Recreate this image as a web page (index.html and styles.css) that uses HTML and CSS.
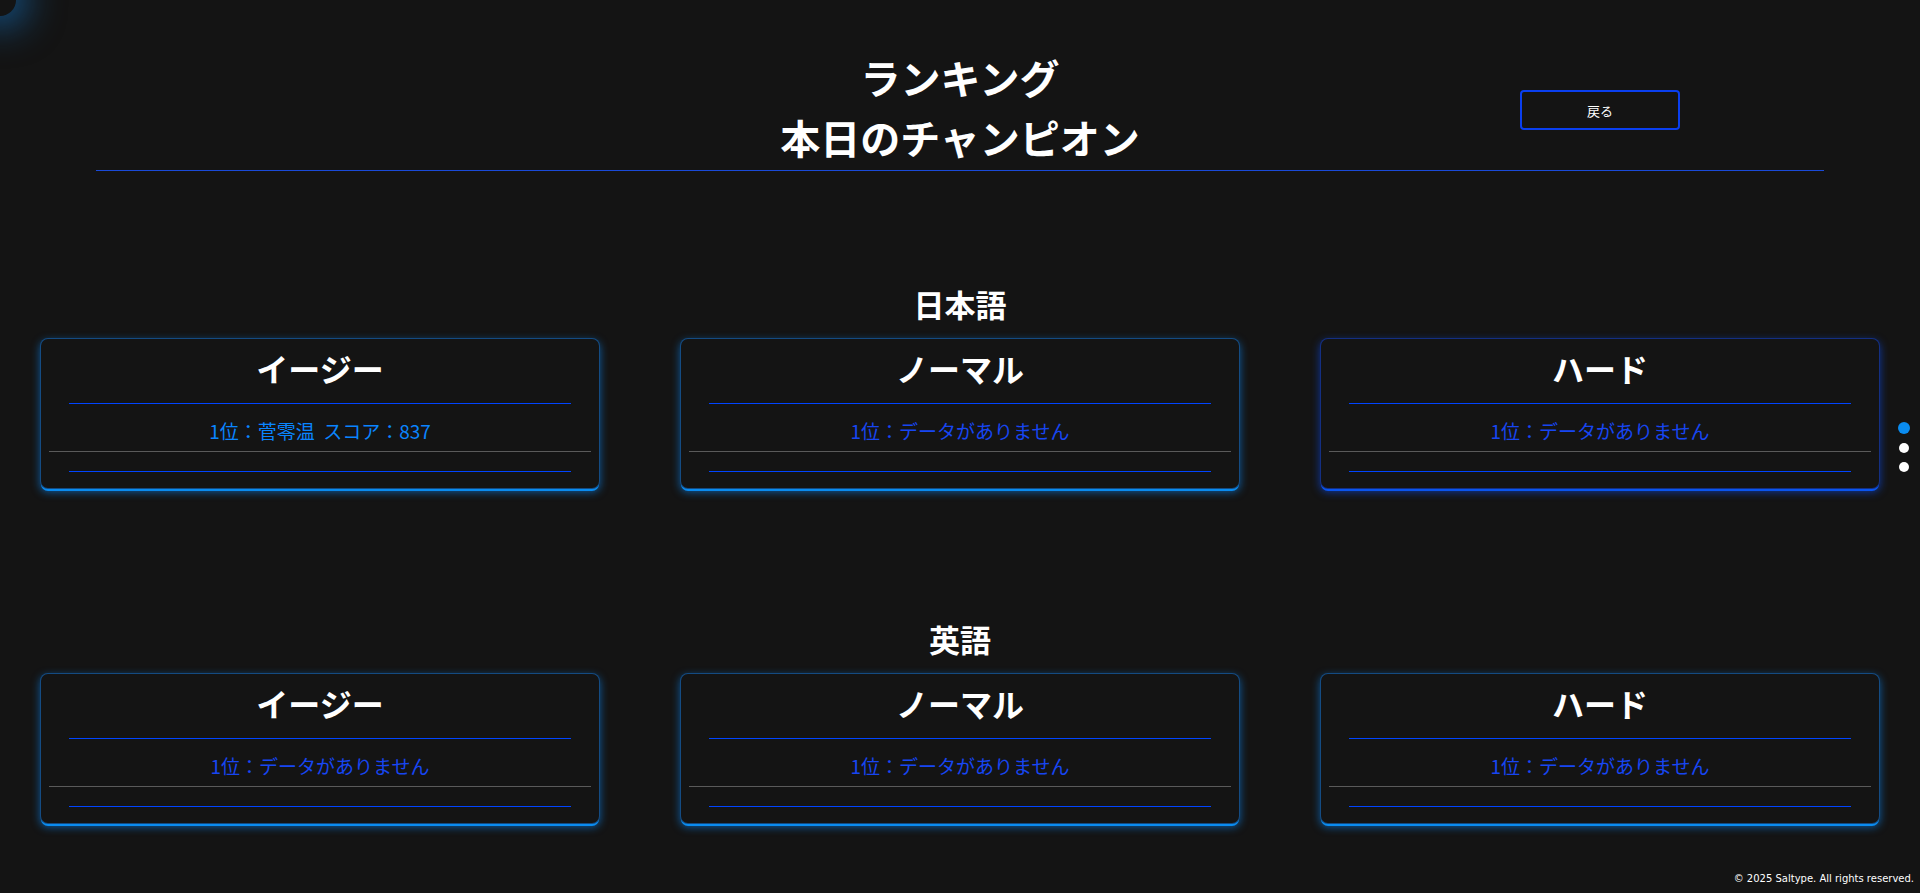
FILE: index.html
```html
<!DOCTYPE html>
<html lang="ja">
<head>
<meta charset="utf-8">
<title>ランキング</title>
<link rel="stylesheet" href="styles.css">
</head>
<body>
<div class="cursor-glow"></div>
<header class="page-header">
  <div class="header-row">
    <div class="spacer"></div>
    <h1 class="page-title">ランキング<br>本日のチャンピオン</h1>
    <div class="header-actions"><button class="back-btn">戻る</button></div>
  </div>
  <hr class="header-rule">
</header>

<main>
  <section class="lang-section">
    <h2 class="lang-title">日本語</h2>
    <div class="card-grid">
      <div class="card">
        <h3 class="card-title">イージー</h3>
        <hr class="card-rule">
        <ul class="rank-list"><li class="rank-item rank-has">1位：菅零温&nbsp;&nbsp;スコア：837</li></ul>
        <hr class="card-rule">
      </div>
      <div class="card">
        <h3 class="card-title">ノーマル</h3>
        <hr class="card-rule">
        <ul class="rank-list"><li class="rank-item">1位：データがありません</li></ul>
        <hr class="card-rule">
      </div>
      <div class="card card-deep">
        <h3 class="card-title">ハード</h3>
        <hr class="card-rule">
        <ul class="rank-list"><li class="rank-item">1位：データがありません</li></ul>
        <hr class="card-rule">
      </div>
    </div>
  </section>

  <section class="lang-section second">
    <h2 class="lang-title">英語</h2>
    <div class="card-grid">
      <div class="card">
        <h3 class="card-title">イージー</h3>
        <hr class="card-rule">
        <ul class="rank-list"><li class="rank-item">1位：データがありません</li></ul>
        <hr class="card-rule">
      </div>
      <div class="card">
        <h3 class="card-title">ノーマル</h3>
        <hr class="card-rule">
        <ul class="rank-list"><li class="rank-item">1位：データがありません</li></ul>
        <hr class="card-rule">
      </div>
      <div class="card">
        <h3 class="card-title">ハード</h3>
        <hr class="card-rule">
        <ul class="rank-list"><li class="rank-item">1位：データがありません</li></ul>
        <hr class="card-rule">
      </div>
    </div>
  </section>
</main>

<nav class="dot-nav">
  <span class="dot active"></span>
  <span class="dot"></span>
  <span class="dot"></span>
</nav>

<footer class="page-footer">© 2025 Saltype. All rights reserved.</footer>
</body>
</html>
```

FILE: styles.css
```css
* { box-sizing: border-box; }

html, body {
  margin: 0;
  padding: 0;
  background: #141414;
  color: #ffffff;
  font-family: "Noto Sans CJK JP", "Noto Sans", sans-serif;
}

body {
  min-height: 893px;
  display: flex;
  flex-direction: column;
  overflow: hidden;
}

.cursor-glow {
  position: fixed;
  left: -16px;
  top: -16px;
  width: 32px;
  height: 32px;
  border-radius: 50%;
  background: #141414;
  box-shadow: 0 0 36px 12px rgba(20, 130, 220, 0.55);
  z-index: 10;
}

.page-header {
  padding-top: 47px;
}

.header-row {
  display: grid;
  grid-template-columns: 1fr auto 1fr;
  align-items: center;
}

.page-title {
  margin: 0;
  font-size: 40px;
  line-height: 60px;
  font-weight: 700;
  text-align: center;
}

.header-actions {
  display: flex;
  justify-content: flex-end;
  padding-right: 240px;
  padding-top: 6px;
}

.back-btn {
  width: 160px;
  height: 40px;
  background: transparent;
  border: 2px solid #0a3ff0;
  border-radius: 4px;
  color: #ffffff;
  font-family: "Noto Sans CJK JP", sans-serif;
  font-size: 13px;
  cursor: pointer;
}

.header-rule {
  width: 90%;
  margin: 3px auto 0;
  border: none;
  border-top: 1px solid #1a4ad8;
  height: 0;
}

.lang-section {
  margin-top: 115px;
}

.lang-section.second {
  margin-top: 132px;
}

.lang-title {
  margin: 0 0 16px;
  text-align: center;
  font-size: 31px;
  line-height: 36px;
  font-weight: 700;
}

.card-grid {
  display: grid;
  grid-template-columns: repeat(3, 1fr);
  gap: 80px;
  padding: 0 40px;
}

.card {
  height: 151px;
  border: 1px solid rgba(20, 120, 220, 0.55);
  border-radius: 8px;
  padding: 9px 0 0;
  background: #141414;
  box-shadow: 0 3px 0 -1px #0a8cf0, 0 3px 8px rgba(10, 140, 255, 0.6);
}

.card-deep {
  border-color: rgba(20, 70, 220, 0.55);
  box-shadow: 0 3px 0 -1px #0a55f0, 0 3px 8px rgba(10, 80, 255, 0.6);
}

.card-title {
  margin: 0;
  text-align: center;
  font-size: 32px;
  line-height: 40px;
  font-weight: 700;
}

.card-rule {
  width: 90%;
  margin: 15px auto 0;
  border: none;
  border-top: 1px solid #0044ff;
  height: 0;
}

.rank-list {
  list-style: none;
  margin: 0;
  padding: 0 8px;
}

.rank-item {
  padding: 13px 0 6px;
  line-height: 28px;
  font-size: 19px;
  text-align: center;
  color: #1746f2;
  border-bottom: 1px solid #5a5a5a;
}

.rank-item.rank-has {
  color: #0a84ff;
}

.rank-list + .card-rule {
  margin-top: 19px;
}

.dot-nav {
  position: fixed;
  right: 10px;
  top: 422px;
  display: flex;
  flex-direction: column;
  align-items: center;
  gap: 9px;
}

.dot {
  width: 10px;
  height: 10px;
  border-radius: 50%;
  background: #ffffff;
}

.dot.active {
  width: 12px;
  height: 12px;
  background: #0a8cf0;
}

.page-footer {
  margin-top: auto;
  padding: 0 6px 7px 0;
  text-align: right;
  font-family: "DejaVu Sans", Verdana, sans-serif;
  font-size: 10px;
  line-height: 14px;
  color: #ffffff;
}
```
